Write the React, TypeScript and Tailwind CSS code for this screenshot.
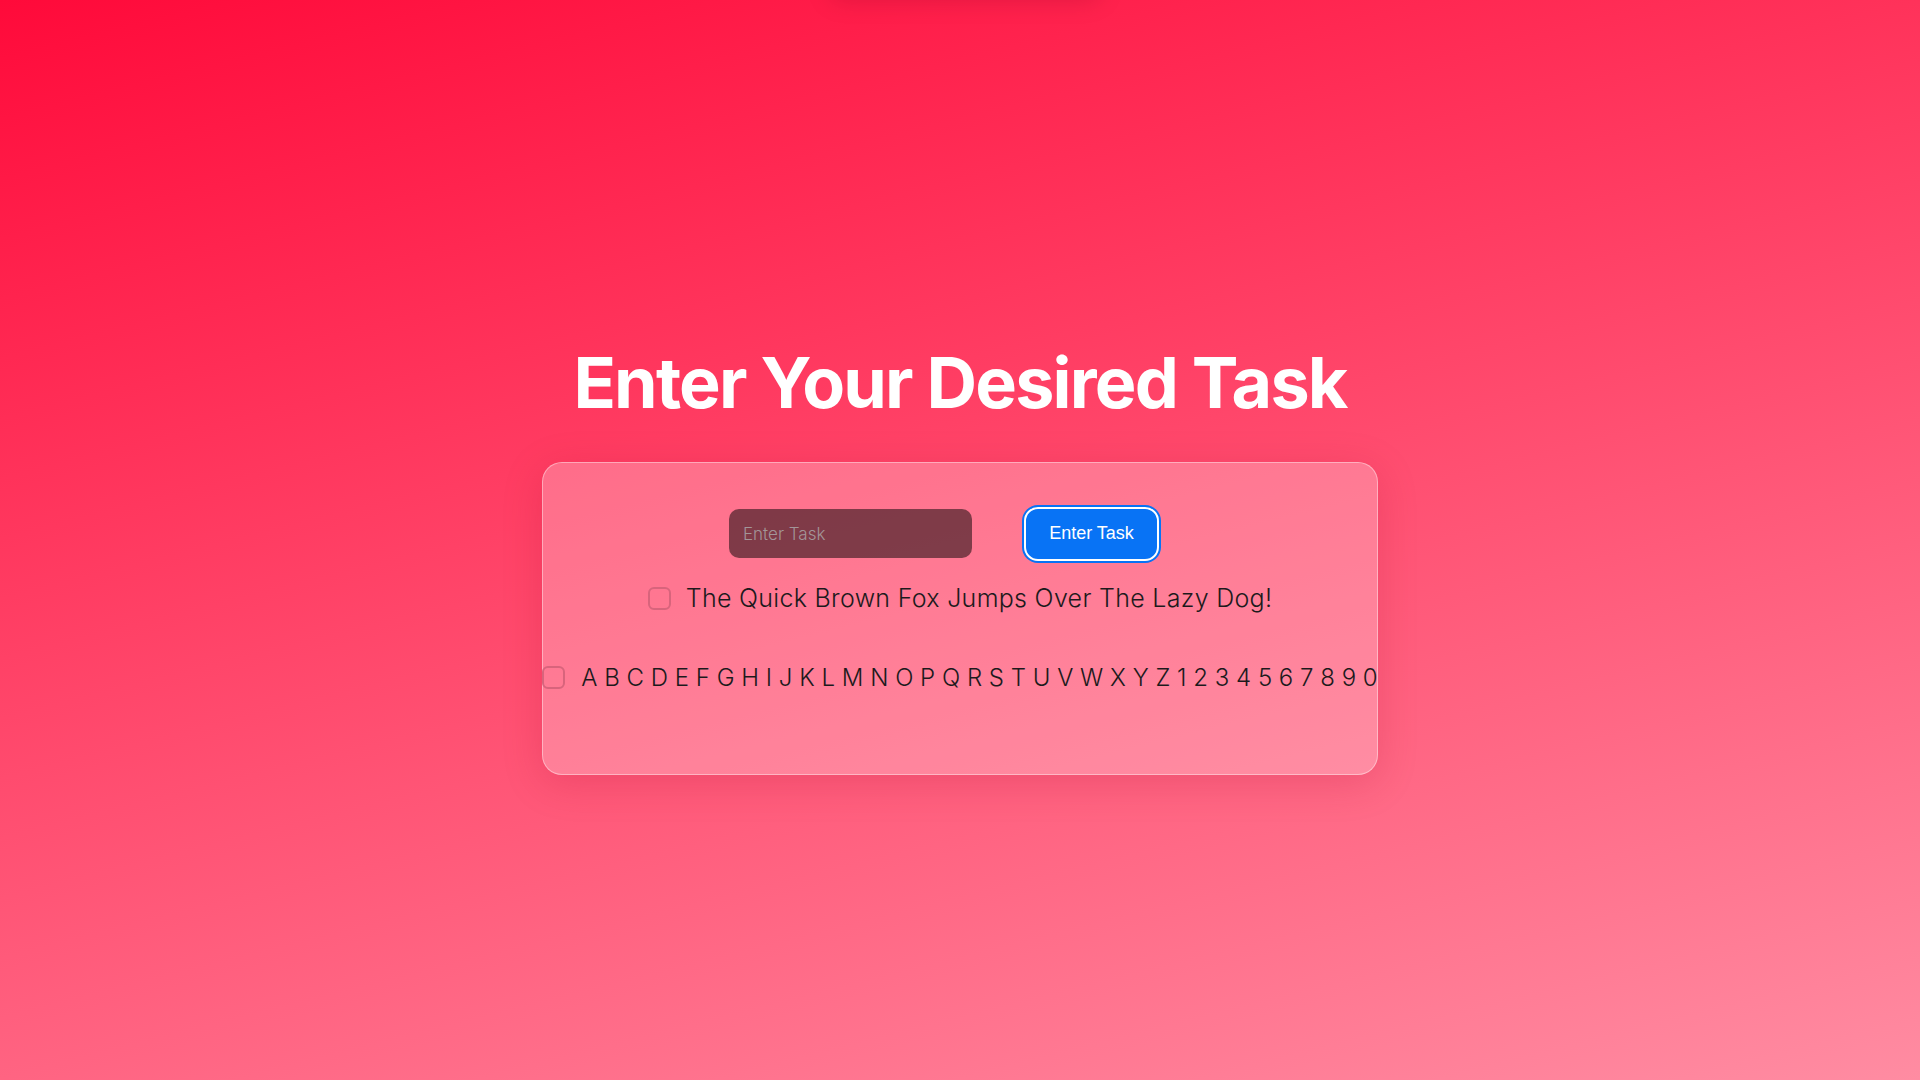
import React, { useState } from 'react';

const App = () => {
  const [task, setTask] = useState('');
  const [done1, setDone1] = useState(false);
  const [done2, setDone2] = useState(false);

  return (
    <div
      className="relative min-h-screen w-full overflow-hidden bg-[linear-gradient(166deg,#ff0a3a_0%,#ff8ca2_100%)] flex flex-col items-center justify-center"
      style={{ fontFamily: 'Inter, "Noto Sans", sans-serif' }}
    >
      {/* faint shadow of something parked above the viewport */}
      <div className="absolute left-[830px] top-[-50px] w-[270px] h-[50px] rounded-xl shadow-[0_0_24px_rgba(120,0,30,0.22)]" />

      <div className="flex flex-col items-center mt-[34px]">
        <h1 className="text-white text-[70px] font-bold leading-[86px] tracking-[-1.8px]">
          Enter Your Desired Task
        </h1>

        {/* Card */}
        <div className="mt-[36px] w-[836px] h-[313px] rounded-[20px] bg-white/25 border border-white/40 shadow-[0_8px_40px_rgba(160,0,40,0.18)] flex flex-col items-center pt-[44px]">
          <div className="flex items-center gap-[52px] h-[54px] pr-[32px]">
            <input
              value={task}
              onChange={(e) => setTask(e.target.value)}
              placeholder="Enter Task"
              className="w-[243px] h-[49px] rounded-[10px] bg-black/50 px-[14px] text-[17px] font-light text-white placeholder:text-[#a39598] outline-none"
            />
            <button
              className="w-[135px] h-[54px] rounded-[14px] bg-[#0873f5] border-2 border-white ring-2 ring-[#0873f5] text-white text-[18px]"
              style={{ fontFamily: '"Liberation Sans", Arial, sans-serif' }}
            >
              Enter Task
            </button>
          </div>

          <label className="mt-[20px] flex items-center h-[36px] gap-[15px] cursor-pointer">
            <input
              type="checkbox"
              checked={done1}
              onChange={() => setDone1(!done1)}
              className="appearance-none w-[23px] h-[23px] rounded-[6px] border-2 border-[#d8647c] bg-transparent"
            />
            <span className="text-[25px] font-light text-[#1c1a1c] tracking-[0.3px]">
              The Quick Brown Fox Jumps Over The Lazy Dog!
            </span>
          </label>

          <label className="mt-[43px] flex items-center h-[36px] gap-[16px] cursor-pointer whitespace-nowrap">
            <input
              type="checkbox"
              checked={done2}
              onChange={() => setDone2(!done2)}
              className="appearance-none w-[23px] h-[23px] rounded-[6px] border-2 border-[#d8647c] bg-transparent"
            />
            <span className="text-[24px] font-light text-[#1c1a1c] tracking-[0px]">
              A B C D E F G H I J K L M N O P Q R S T U V W X Y Z 1 2 3 4 5 6 7 8 9 0
            </span>
          </label>
        </div>
      </div>
    </div>
  );
};

export default App;
